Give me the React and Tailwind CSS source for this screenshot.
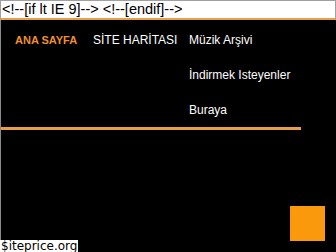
export default function App() {
  return (
    <div className="w-[336px] h-[252px] bg-black relative overflow-hidden font-['Liberation_Sans',Arial,sans-serif]">
      {/* conditional comment leak */}
      <div className="h-[20px] bg-white border-t border-r border-l border-[#a0a0a0] border-b-[2px] border-b-[#e8a048] text-[14.5px] leading-[17px] text-black pl-[1px] whitespace-nowrap">
        {"<!--[if lt IE 9]--> <!--[endif]-->"}
      </div>

      <div className="border-l border-[#8a8a8a] h-[232px]">
        {/* nav */}
        <div className="flex pt-[13px] whitespace-nowrap">
          <div className="w-[77px] pl-[14px] text-[11px] font-bold text-[#f0902a] leading-[14px]">
            ANA SAYFA
          </div>
          <div className="w-[96px] pl-[15px] text-[12px] text-white leading-[14px]">
            SİTE HARİTASI
          </div>
          <ul className="pl-[15px] text-[12px] text-white leading-[14px] flex flex-col gap-[21px]">
            <li>Müzik Arşivi</li>
            <li>İndirmek Isteyenler</li>
            <li>Buraya</li>
          </ul>
        </div>

        <div className="mt-[10px] w-[300px] h-[3px] bg-[#e8a048]" />

        <div className="flex justify-end pr-[11px] mt-[76px]">
          <div className="w-[35px] h-[35px] bg-[#fb990c]" />
        </div>
      </div>

      <div className="absolute left-0 bottom-0 bg-white text-black text-[12px] leading-[12px] px-[1px] font-['DejaVu_Sans',sans-serif]">
        $iteprice.org
      </div>
    </div>
  );
}
